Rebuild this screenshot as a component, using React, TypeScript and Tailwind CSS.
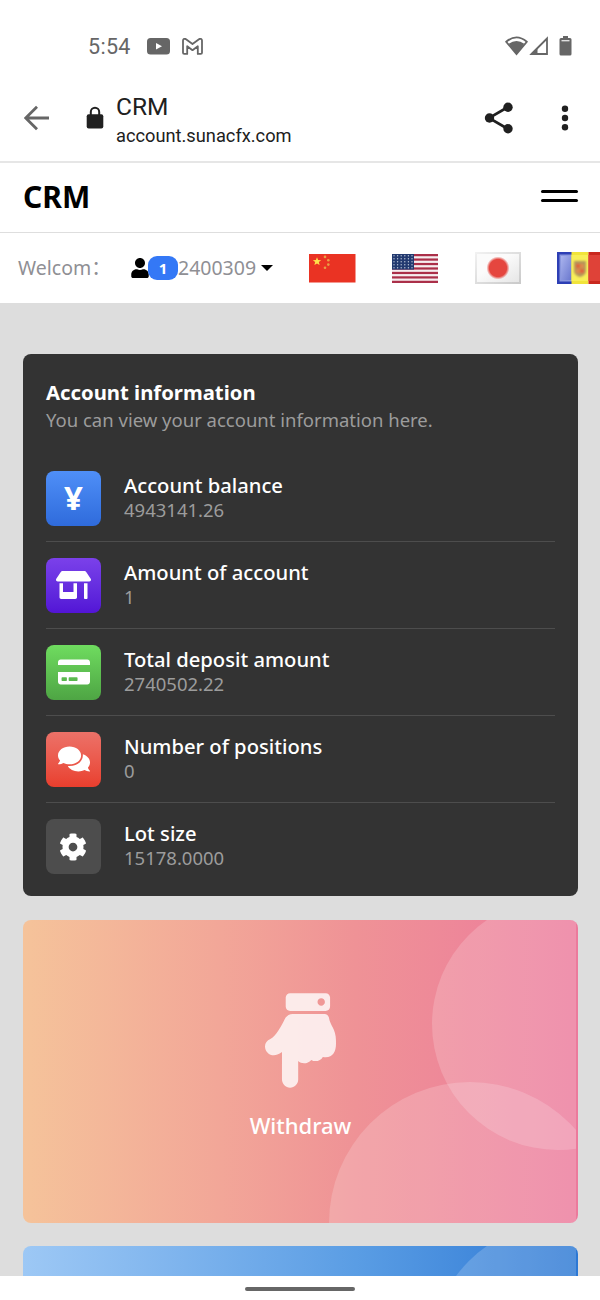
import type { ReactNode } from "react";
import {
  FaCog,
  FaComments,
  FaCreditCard,
  FaHandPointDown,
  FaStoreAlt,
  FaUser,
} from "react-icons/fa";

type AccountItem = {
  label: string;
  value: string;
  icon: ReactNode;
  color: string;
};

const items: AccountItem[] = [
  {
    label: "Account balance",
    value: "4943141.26",
    icon: <span className="mb-[2px] text-[33px] leading-none font-bold">¥</span>,
    color: "bg-linear-to-b from-[#4f8ff7] to-[#2f6bdc]",
  },
  {
    label: "Amount of account",
    value: "1",
    icon: <FaStoreAlt className="w-[35px] h-[28px]" />,
    color: "bg-linear-to-b from-[#7b40ea] to-[#5314d6]",
  },
  {
    label: "Total deposit amount",
    value: "2740502.22",
    icon: <FaCreditCard className="size-[32px]" />,
    color: "bg-linear-to-b from-[#6fdc5f] to-[#4ea544]",
  },
  {
    label: "Number of positions",
    value: "0",
    icon: <FaComments className="size-[32px]" />,
    color: "bg-linear-to-b from-[#ec7168] to-[#e93e2d]",
  },
  {
    label: "Lot size",
    value: "15178.0000",
    icon: <FaCog className="mr-px size-[28px]" />,
    color: "bg-[#4d4d4d]",
  },
];

function StatusBar() {
  return (
    <div className="h-[74px] pt-[18px] pl-[88px] pr-[28px] flex items-center text-[#666]">
      <span className="w-[59px] pt-[2px] text-[21.5px] leading-none tracking-[0.3px]">5:54</span>
      <svg width="23" height="17" viewBox="0 0 23 17">
        <rect width="23" height="16.5" rx="3.5" fill="currentColor" />
        <path d="M9 5v6.500l6-3.250z" fill="#fff" />
      </svg>
      <svg className="ml-[12px]" width="21" height="17" viewBox="0 0 21 17" fill="none" stroke="currentColor" strokeWidth="1.8" strokeLinejoin="round">
        <path d="M1 2.500v12.200c0 .7.500 1.200 1.200 1.200H5.200V8.200l5.300 4 5.300-4v7.700h3c.7 0 1.200-.5 1.200-1.200V2.500c0-1.600-1.800-2.200-3-1.300L10.500 6 4 1.200C2.800.3 1 .9 1 2.500z" />
      </svg>
      <div className="ml-auto flex items-center">
        <svg width="23" height="20" viewBox="0 0 23 20" fill="none">
          <path d="M1.200 5.800Q11.500-3 21.800 5.800L11.500 18z" stroke="currentColor" strokeWidth="1.800" />
          <path d="M3.700 7.800Q11.500 2.400 19.300 7.800L11.500 18.500z" fill="currentColor" />
        </svg>
        <svg className="ml-[1px]" width="20" height="20" viewBox="0 0 20 20">
          <path d="M2.500 18 18 2.500V18z" fill="none" stroke="currentColor" strokeWidth="1.800" />
          <path d="M1 19 8.500 11.500V19z" fill="currentColor" />
        </svg>
        <svg className="ml-[10px]" width="13" height="20" viewBox="0 0 13 20">
          <path d="M4 0h5v2h2q1.500 0 1.500 1.500V18q0 1.500-1.500 1.500H2Q.5 19.500.5 18V3.500Q.5 2 2 2h2z" fill="currentColor" />
          <path d="M2.500 4.200h8V5.300h-8z" fill="#fff" />
        </svg>
      </div>
    </div>
  );
}

function BrowserBar() {
  return (
    <div className="h-[89px] pl-[24px] pr-[31px] flex items-center border-b-2 border-[#e6e6e6] text-[#202020]">
      <svg width="26" height="26" viewBox="0 0 26 26" fill="none" stroke="#666" strokeWidth="2.800">
        <path d="M25 13H2.500M13 1.700 1.700 13 13 24.300" />
      </svg>
      <svg className="ml-[36px]" width="18" height="24" viewBox="0 0 18 24">
        <rect x=".7" y="8.200" width="16.600" height="14.300" rx="2" fill="currentColor" />
        <path d="M4.800 9V6a4.200 4.200 0 0 1 8.400 0v3" fill="none" stroke="currentColor" strokeWidth="2" />
      </svg>
      <div className="ml-[12px] pt-[6px]">
        <div className="text-[24.500px] leading-[30px]">CRM</div>
        <div className="text-[18.250px] leading-[27px]">account.sunacfx.com</div>
      </div>
      <svg className="ml-auto" width="30" height="32" viewBox="0 0 30 32" fill="currentColor">
        <path d="M24 5 5 16l19 11" fill="none" stroke="currentColor" strokeWidth="2.600" />
        <circle cx="24" cy="5.300" r="4.700" />
        <circle cx="5.500" cy="16" r="4.700" />
        <circle cx="24" cy="26.800" r="4.700" />
      </svg>
      <svg className="ml-[47px]" width="8" height="26" viewBox="0 0 8 26" fill="currentColor">
        <circle cx="4" cy="3.800" r="3.200" />
        <circle cx="4" cy="13" r="3.200" />
        <circle cx="4" cy="22.200" r="3.200" />
      </svg>
    </div>
  );
}

function ChinaFlag() {
  return (
    <svg width="47" height="29" viewBox="0 0 47 29">
      <rect width="46.500" height="28.500" fill="#ea3323" />
      <path fill="#ffe14b" d="m8 3.200 1.100 2.900 3.100.1-2.400 1.900.8 3L8 9.400l-2.600 1.700.8-3-2.400-1.900 3.100-.1z" />
      <g fill="#e9a045">
        <circle cx="16" cy="2.900" r="1.300" />
        <circle cx="19.300" cy="6.200" r="1.300" />
        <circle cx="19.300" cy="10.600" r="1.300" />
        <circle cx="16" cy="13.800" r="1.300" />
      </g>
    </svg>
  );
}

function UsaFlag() {
  return (
    <svg width="46" height="29" viewBox="0 0 46 29">
      <rect width="46" height="29" fill="#f6eef0" />
      {[0, 1, 2, 3, 4, 5, 6].map((i) => (
        <rect key={i} y={i * 4.46} width="46" height="2.230" fill="#ab2f49" />
      ))}
      <rect width="22" height="15.600" fill="#233a70" />
      {[0, 1, 2, 3, 4].map((row) =>
        [0, 1, 2, 3, 4, 5].map((col) => (
          <circle key={`${row}-${col}`} cx={2 + col * 3.6} cy={1.8 + row * 3} r=".7" fill="#b9c4d6" />
        ))
      )}
    </svg>
  );
}

function JapanFlag() {
  return (
    <svg width="46" height="32" viewBox="0 0 46 32">
      <defs>
        <linearGradient id="jp" x1="0" y1="0" x2="1" y2="1">
          <stop offset="0" stopColor="#f2f2f2" />
          <stop offset="1" stopColor="#c9c9c9" />
        </linearGradient>
        <linearGradient id="jpField" x1="0" y1="0" x2="1" y2="1">
          <stop offset=".4" stopColor="#fbfbfb" />
          <stop offset="1" stopColor="#e6e6e6" />
        </linearGradient>
        <radialGradient id="jpSun">
          <stop offset=".75" stopColor="#e5463f" />
          <stop offset="1" stopColor="#e5463f" stopOpacity="0" />
        </radialGradient>
      </defs>
      <rect width="46" height="32" fill="url(#jp)" />
      <rect x="2" y="2" width="42" height="28" fill="url(#jpField)" />
      <circle cx="23" cy="16" r="11.500" fill="url(#jpSun)" />
    </svg>
  );
}

function AndorraFlag() {
  return (
    <svg width="46" height="32" viewBox="0 0 46 32">
      <defs>
        <linearGradient id="adBlue" x1="0" y1="0" x2="1" y2="1">
          <stop offset="0" stopColor="#aab4ee" />
          <stop offset="1" stopColor="#6876cd" />
        </linearGradient>
        <filter id="soft">
          <feGaussianBlur stdDeviation=".8" />
        </filter>
      </defs>
      <rect width="15" height="32" fill="#2d3fb5" />
      <rect x="2.500" y="2.500" width="12.500" height="27" fill="#8b98de" />
      <rect x="4" y="4" width="11" height="24" fill="url(#adBlue)" />
      <rect x="14.500" width="17" height="32" fill="#f1e43b" />
      <rect x="14.500" y="3" width="17" height="26" fill="#f8ef58" />
      <rect x="31.500" width="14.500" height="32" fill="#c9281e" />
      <rect x="31.500" y="3" width="12" height="26" fill="#df4238" />
      <g filter="url(#soft)">
        <path d="M17 9h12v10q0 4-6 6-6-2-6-6z" fill="#b3955a" />
        <path d="M19 12h4v4h-4zm4 5h4v4h-4z" fill="#e2603a" />
        <path d="M23 12h4v4h-4zm-4 5h4v4h-4z" fill="#dd8a4c" />
      </g>
    </svg>
  );
}

function SiteHeader() {
  return (
    <div className="h-[70px] pl-[23px] pr-[22px] flex items-center justify-between border-b border-[#dedede]">
      <div className="mb-[2px] text-[30px] leading-none font-bold">CRM</div>
      <div className="mb-[3px] w-[37px] flex flex-col gap-[6px]">
        <div className="h-[3px] rounded-full bg-black" />
        <div className="h-[3px] rounded-full bg-black" />
      </div>
    </div>
  );
}

function UserBar() {
  return (
    <div className="h-[70px] pl-[18px] flex items-center overflow-hidden text-[19.500px] text-[#8f8f94]">
      <span className="w-[113px] shrink-0 whitespace-nowrap">Welcom：</span>
      <FaUser className="w-[18px] h-[20px] shrink-0 text-black" />
      <span className="-ml-px w-[30px] h-[24px] shrink-0 rounded-[9px] bg-[#3478f6] text-white text-[15px] font-bold flex items-center justify-center">
        1
      </span>
      <span className="w-[83px] shrink-0">2400309</span>
      <svg className="shrink-0" width="12" height="6" viewBox="0 0 12 6">
        <path d="M0 0h12L6 6z" />
      </svg>
      <div className="ml-[36px] flex shrink-0 items-center gap-[36.400px]">
        <ChinaFlag />
        <UsaFlag />
        <JapanFlag />
        <AndorraFlag />
      </div>
    </div>
  );
}

function AccountCard() {
  return (
    <section className="h-[542px] shrink-0 rounded-[8px] bg-[#333] px-[23px] pt-[25px] text-[18.500px]">
      <h2 className="text-[20.300px] leading-[27px] font-bold text-white">Account information</h2>
      <p className="leading-[28px] text-[#9c9c9c]">You can view your account information here.</p>
      <ul className="mt-[21px] divide-y divide-[#4d4d4d]">
        {items.map((item) => (
          <li key={item.label} className="h-[87px] flex items-center">
            <div className={`size-[55px] rounded-[8px] flex items-center justify-center text-white ${item.color}`}>
              {item.icon}
            </div>
            <div className="ml-[23px] pb-[2px]">
              <div className="text-[20.200px] leading-[25px] font-medium text-white">{item.label}</div>
              <div className="leading-[24px] text-[#9c9c9c]">{item.value}</div>
            </div>
          </li>
        ))}
      </ul>
    </section>
  );
}

// translucent circles in the right part of each action card
function CardCircles() {
  return (
    <svg className="absolute inset-0" width="553" height="303" viewBox="0 0 553 303" fill="#fff" fillOpacity=".18">
      <circle cx="535" cy="104" r="126" />
      <circle cx="447" cy="303" r="141" />
    </svg>
  );
}

export default function App() {
  return (
    <div className="w-[600px] h-[1300px] flex flex-col overflow-hidden bg-white font-['Noto_Sans','Noto_Sans_CJK_SC',sans-serif]">
      <header className="shrink-0 font-['Roboto',sans-serif]">
        <StatusBar />
        <BrowserBar />
      </header>
      <div className="shrink-0">
        <SiteHeader />
        <UserBar />
      </div>

      <main className="h-[973px] shrink-0 overflow-hidden bg-[#ddd] pt-[51px] pl-[23px] pr-[22px] flex flex-col">
        <AccountCard />
        <section className="relative mt-[24px] h-[303px] shrink-0 overflow-hidden rounded-[8px] bg-linear-to-r from-[#f5c39a] via-[#ef9296] via-60% to-[#ec7a9c]">
          <CardCircles />
          <div className="relative pt-[73px] flex flex-col items-center text-white">
            <FaHandPointDown className="mr-px w-[71px] h-[95px] opacity-80" />
            <div className="mt-[22px] text-[22px] leading-[30px] font-medium">Withdraw</div>
          </div>
        </section>
        <section className="relative mt-[23px] h-[303px] shrink-0 overflow-hidden rounded-[8px] bg-linear-to-r from-[#9dc8f5] via-[#5a9de4] via-60% to-[#2c78d4]">
          <CardCircles />
        </section>
      </main>

      <footer className="flex-1 flex justify-center pt-[11px]">
        <div className="w-[110px] h-[4px] rounded-full bg-[#666]" />
      </footer>
    </div>
  );
}
